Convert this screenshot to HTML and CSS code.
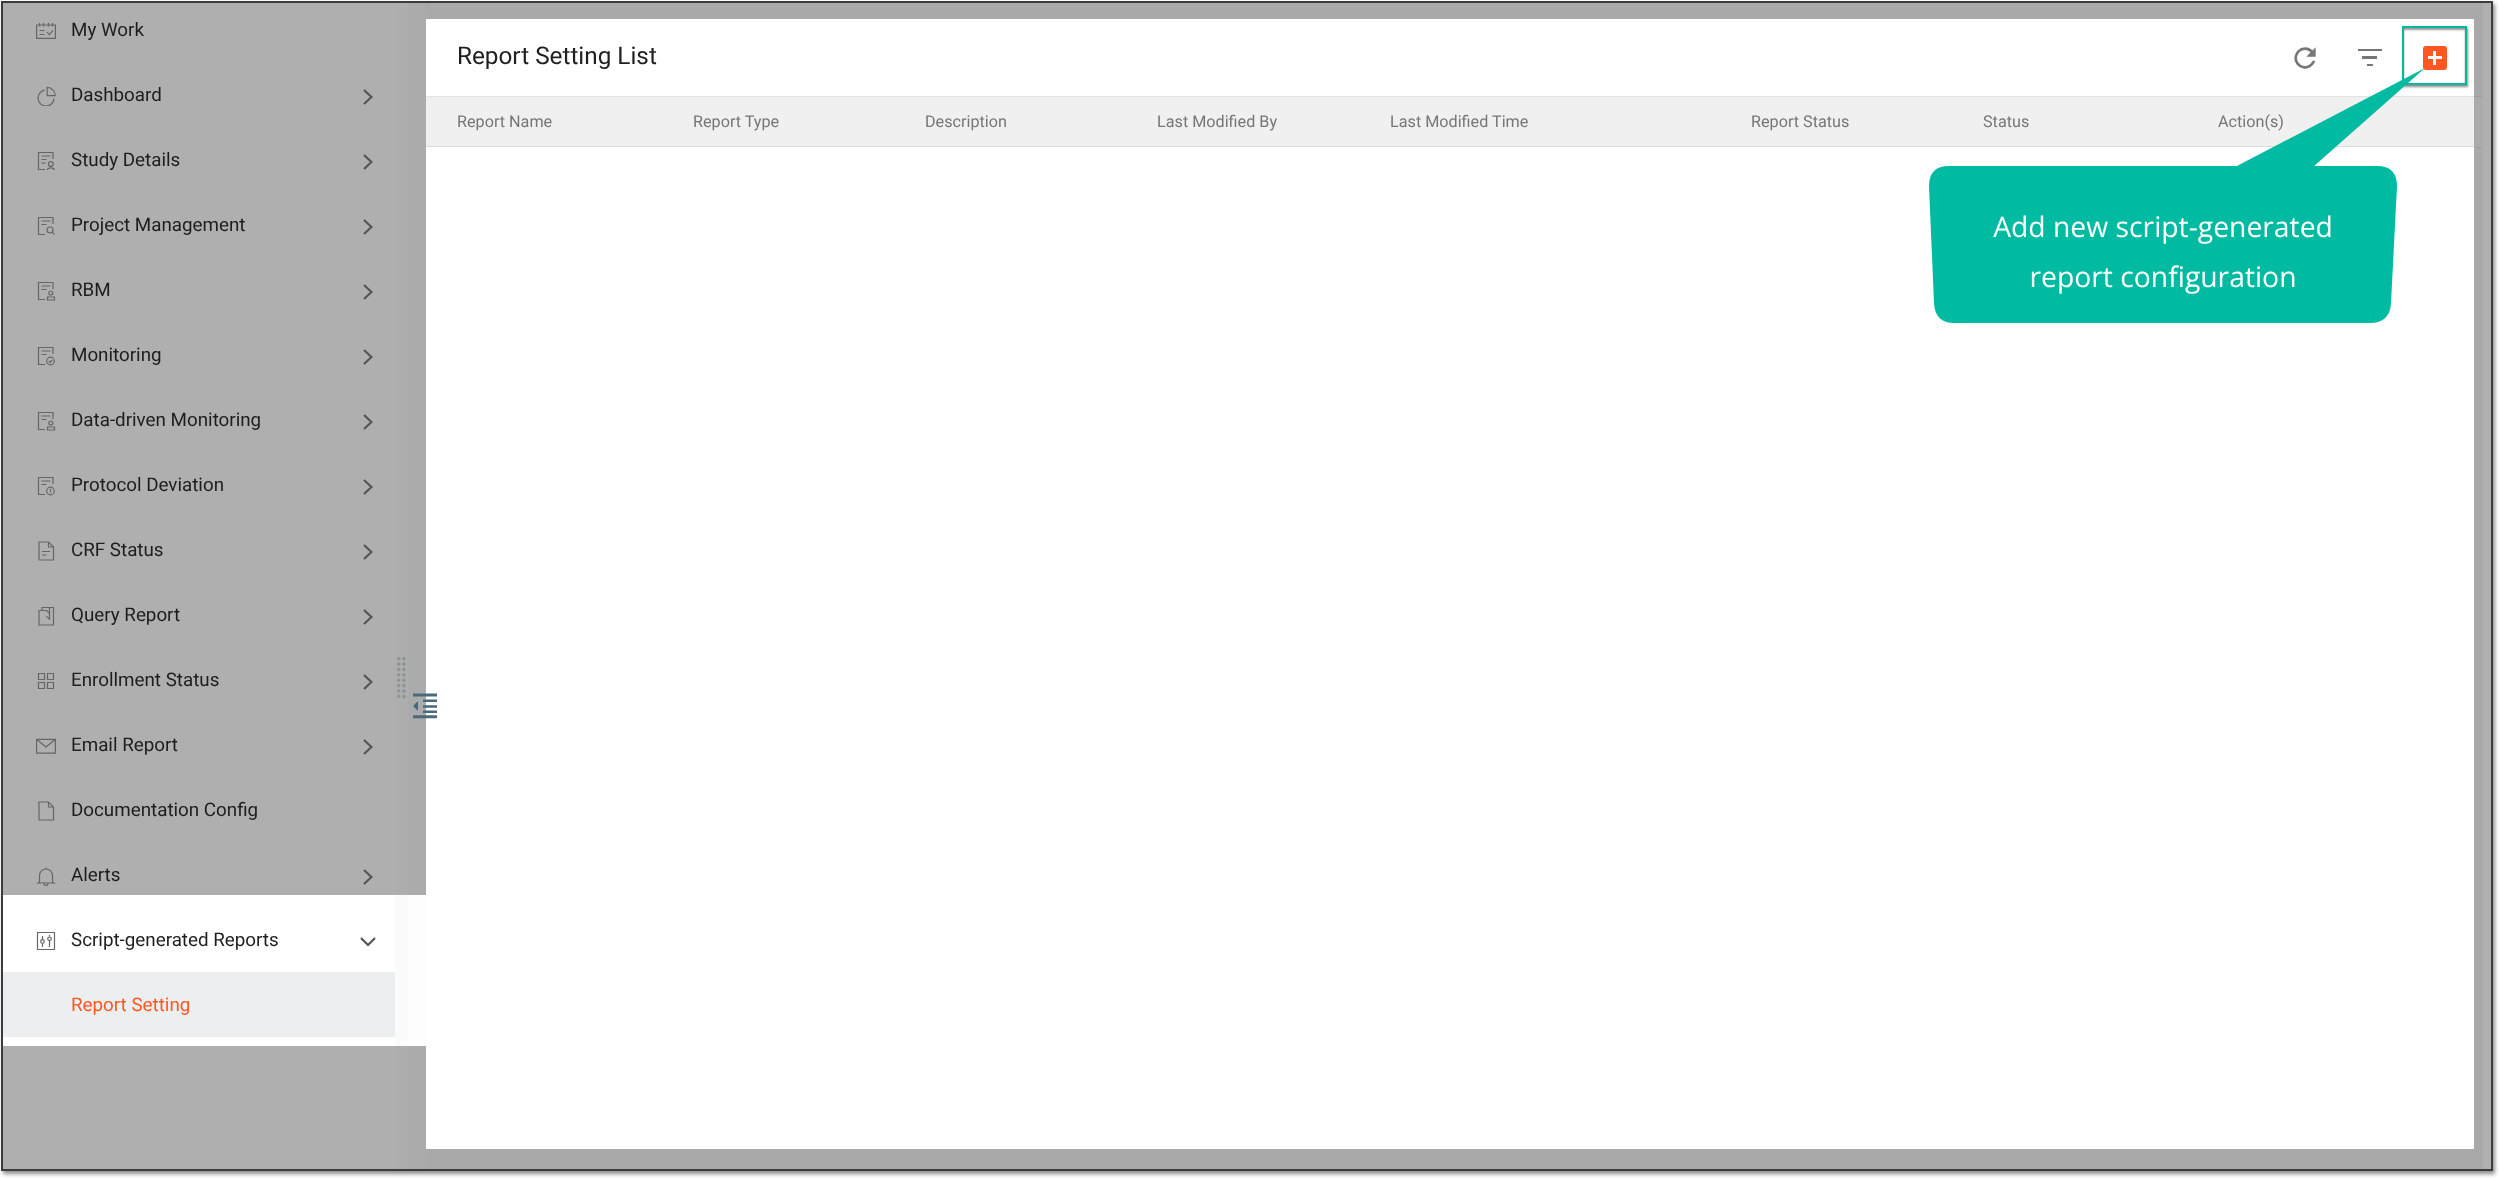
FILE: index.html
```html
<!DOCTYPE html>
<html lang="en">
<head>
<meta charset="utf-8">
<title>Report Setting List</title>
<link rel="stylesheet" href="styles.css">
</head>
<body>
<svg class="defs" width="0" height="0" aria-hidden="true">
  <defs>
    <symbol id="i-work" viewBox="0 0 20 20"><path d="M.6 4h18.800v13.400H.6zM3.500 2v3.500M7.500 2v3.500M12.500 2v3.500M16.500 2v3.500M3.500 9.500h5M3.500 13.500h5M11 11.200l2.400 2.400 3.600-4.200"/></symbol>
    <symbol id="i-dash" viewBox="0 0 20 20"><path d="M8.600 4.200A8 8 0 1 0 18 12.400M11.200 1.400v8.200h8A8.200 8.200 0 0 0 11.200 1.400z"/></symbol>
    <symbol id="i-doc" viewBox="0 0 20 20"><path d="M17 8V1.500H2.500v17H9M5.500 5h9M5.500 8.500h5"/></symbol>
    <symbol id="i-study" viewBox="0 0 20 20"><use href="#i-doc"/><path d="M5.500 12h4"/><circle cx="14.800" cy="13" r="2.400"/><path d="M11.200 19c.4-2.800 6.800-2.800 7.200 0"/></symbol>
    <symbol id="i-proj" viewBox="0 0 20 20"><use href="#i-doc"/><circle cx="14" cy="14" r="3"/><path d="M16.200 16.200l2.400 2.400"/></symbol>
    <symbol id="i-rbm" viewBox="0 0 20 20"><use href="#i-doc"/><circle cx="14.800" cy="12" r="2"/><path d="M11.500 16h7v3h-7z"/></symbol>
    <symbol id="i-mon" viewBox="0 0 20 20"><use href="#i-doc"/><circle cx="14.500" cy="15" r="3.800"/><path d="M12.800 15l1.300 1.300 2.100-2.300"/></symbol>
    <symbol id="i-dev" viewBox="0 0 20 20"><use href="#i-doc"/><circle cx="14.500" cy="15" r="3.800"/><path d="M14.500 12.800v2.800M14.500 16.400v.8"/></symbol>
    <symbol id="i-crf" viewBox="0 0 20 20"><path d="M3 1h9.500L17.500 6v13H3zM12.500 1v5h5M6 10.500h8M6 14h4.500"/></symbol>
    <symbol id="i-query" viewBox="0 0 20 20"><path d="M6 4.500H3V19h14.500V1.500H6zM6 4.500h4.500l3 3V13l-3-2.500M13.500 1.500v6"/></symbol>
    <symbol id="i-enrol" viewBox="0 0 20 20"><path d="M2.500 2.500h6v6h-6zM11.500 2.500h6v6h-6zM2.500 11.500h6v6h-6zM11.500 11.500h6v6h-6z"/></symbol>
    <symbol id="i-mail" viewBox="0 0 20 20"><path d="M.6 3.300h18.800v13.800H.6zM.6 3.300L10 11l9.400-7.700"/></symbol>
    <symbol id="i-file" viewBox="0 0 20 20"><path d="M3 1h9.500L17.500 6v13H3zM12.500 1v5h5"/></symbol>
    <symbol id="i-bell" viewBox="0 0 20 20"><path d="M10 1.500v1.500M3.500 16V9.500a6.500 6.500 0 0 1 13 0V16l1.500 1H2zM8 17.500a2 2 0 0 0 4 0"/></symbol>
    <symbol id="i-script" viewBox="0 0 20 20"><path d="M1.500 1.500h17v17h-17zM6.500 5v3M6.500 13v3M13.500 4v1.500M13.500 10v6"/><circle cx="6.500" cy="10.500" r="1.800"/><circle cx="13.500" cy="7.800" r="1.800"/></symbol>
  </defs>
</svg>

<div class="frame">
  <aside class="side">
    <nav class="menu">
      <a class="row"><svg class="ico"><use href="#i-work"/></svg><span>My Work</span></a>
      <a class="row"><svg class="ico"><use href="#i-dash"/></svg><span>Dashboard</span><svg class="chev" viewBox="0 0 10 16"><path d="M1 1l7.500 7L1 15"/></svg></a>
      <a class="row"><svg class="ico"><use href="#i-study"/></svg><span>Study Details</span><svg class="chev" viewBox="0 0 10 16"><path d="M1 1l7.500 7L1 15"/></svg></a>
      <a class="row"><svg class="ico"><use href="#i-proj"/></svg><span>Project Management</span><svg class="chev" viewBox="0 0 10 16"><path d="M1 1l7.500 7L1 15"/></svg></a>
      <a class="row"><svg class="ico"><use href="#i-rbm"/></svg><span>RBM</span><svg class="chev" viewBox="0 0 10 16"><path d="M1 1l7.500 7L1 15"/></svg></a>
      <a class="row"><svg class="ico"><use href="#i-mon"/></svg><span>Monitoring</span><svg class="chev" viewBox="0 0 10 16"><path d="M1 1l7.500 7L1 15"/></svg></a>
      <a class="row"><svg class="ico"><use href="#i-rbm"/></svg><span>Data-driven Monitoring</span><svg class="chev" viewBox="0 0 10 16"><path d="M1 1l7.500 7L1 15"/></svg></a>
      <a class="row"><svg class="ico"><use href="#i-dev"/></svg><span>Protocol Deviation</span><svg class="chev" viewBox="0 0 10 16"><path d="M1 1l7.500 7L1 15"/></svg></a>
      <a class="row"><svg class="ico"><use href="#i-crf"/></svg><span>CRF Status</span><svg class="chev" viewBox="0 0 10 16"><path d="M1 1l7.500 7L1 15"/></svg></a>
      <a class="row"><svg class="ico"><use href="#i-query"/></svg><span>Query Report</span><svg class="chev" viewBox="0 0 10 16"><path d="M1 1l7.500 7L1 15"/></svg></a>
      <a class="row"><svg class="ico"><use href="#i-enrol"/></svg><span>Enrollment Status</span><svg class="chev" viewBox="0 0 10 16"><path d="M1 1l7.500 7L1 15"/></svg></a>
      <a class="row"><svg class="ico"><use href="#i-mail"/></svg><span>Email Report</span><svg class="chev" viewBox="0 0 10 16"><path d="M1 1l7.500 7L1 15"/></svg></a>
      <a class="row"><svg class="ico"><use href="#i-file"/></svg><span>Documentation Config</span></a>
      <a class="row"><svg class="ico"><use href="#i-bell"/></svg><span>Alerts</span><svg class="chev" viewBox="0 0 10 16"><path d="M1 1l7.500 7L1 15"/></svg></a>
      <div class="group">
        <a class="row"><svg class="ico"><use href="#i-script"/></svg><span>Script-generated Reports</span><svg class="chev-down" viewBox="0 0 16 10"><path d="M1 1l7 7 7-7"/></svg></a>
        <a class="row sub"><span>Report Setting</span></a>
      </div>
    </nav>
  </aside>

  <main class="content">
    <section class="panel">
      <header class="bar">
        <h1 class="title">Report Setting List</h1>
        <div class="actions">
          <button class="act"><svg class="refresh" viewBox="0 0 24 24"><path d="M17.650 6.350A7.960 7.960 0 0 0 12 4a8 8 0 1 0 7.730 10h-2.080A6 6 0 1 1 12 6c1.660 0 3.140.69 4.220 1.780L13 11h7V4z"/></svg></button>
          <button class="act"><span class="filter"><i></i><i></i><i></i></span></button>
          <button class="act"><span class="plus"></span></button>
        </div>
      </header>
      <div class="thead">
        <span>Report Name</span>
        <span>Report Type</span>
        <span>Description</span>
        <span>Last Modified By</span>
        <span>Last Modified Time</span>
        <span>Report Status</span>
        <span>Status</span>
        <span>Action(s)</span>
      </div>
    </section>
  </main>
</div>

<div class="handle"></div>
<svg class="collapse" viewBox="0 0 24 26"><path d="M0 .5h24v3H0zM10 6.500h14V9H10zM10 12.300h14v2.500H10zM10 17.500h14V20H10zM0 22.200h24v3H0zM5 8v10l-5-5z"/></svg>
<div class="highlight"></div>
<div class="callout">
  <svg class="bubble" viewBox="0 0 468 157"><path d="M20 0H448Q468 0 468 20L462 137Q461 157 441 157H25Q6 157 5 137L0 20Q0 0 20 0Z"/><path d="M306 1L496-98 384 1Z"/></svg>
  <p class="callout-text">Add new script-generated<br>report configuration</p>
</div>
</body>
</html>
```
FILE: styles.css
```css
* { box-sizing: border-box; }
html, body { margin: 0; height: 100%; background: #fff; }
body {
  font-family: Roboto, "Liberation Sans", sans-serif;
  overflow: hidden;
  text-rendering: geometricPrecision;
  filter: blur(.5px);
}
.defs { position: absolute; }

.frame {
  display: flex;
  width: 2492px;
  height: 1170px;
  margin: 1px 0 0 1px;
  border: 2px solid #3c3c3c;
  box-shadow: 2px 3px 4px rgba(0, 0, 0, .45);
  overflow: hidden;
  background: linear-gradient(90deg, #a9a9a9 2480px, #b0b0b0 2480px);
}

.side {
  flex: 0 0 423px;
  background: linear-gradient(90deg, #afafaf 392px, #adafaf 392px, #adafaf 405px, #ababab 405px);
}
.menu { margin-top: -6px; }
.row {
  display: flex;
  align-items: center;
  height: 65px;
  padding-left: 33px;
  width: 392px;
  font-size: 18.800px;
  color: #1e1e1e;
}
.row span { flex: 1; }
.ico {
  flex: 0 0 20px;
  width: 20px;
  height: 20px;
  margin: 2px 15px 0 0;
  fill: none;
  stroke: #666;
  stroke-width: 1.200;
}
.chev {
  flex: 0 0 10px;
  width: 10px;
  height: 16px;
  margin: 4px 22px 0 0;
  fill: none;
  stroke: #555;
  stroke-width: 2.200;
}
.chev-down {
  flex: 0 0 16px;
  width: 16px;
  height: 10px;
  margin: 4px 19px 0 0;
  fill: none;
  stroke: #555;
  stroke-width: 2.200;
}
.group {
  margin-top: -12px;
  padding: 12px 0 9px;
  background: linear-gradient(90deg, #fff 392px, #fafbfb 392px, #fafbfb 405px, #fdfdfd 405px);
}
.sub {
  background: #edeef0;
  padding-left: 68px;
  color: #ff5722;
}

.content {
  flex: 1;
  display: flex;
  padding: 16px 17px 20px 0;
}
.panel { flex: 1; background: #fff; }
.bar {
  display: flex;
  align-items: center;
  justify-content: space-between;
  height: 77px;
  padding: 0 7px 5px 31px;
}
.title {
  margin: 0;
  font-size: 24.300px;
  font-weight: 400;
  color: #1f1f1f;
}
.actions { display: flex; margin-bottom: -5px; }
.act {
  display: flex;
  align-items: center;
  justify-content: center;
  width: 65px;
  height: 65px;
  padding: 0;
  border: 0;
  background: none;
}
.refresh { width: 32px; height: 32px; fill: #777; }
.filter { display: flex; flex-direction: column; align-items: center; gap: 5px; width: 24px; }
.filter i { display: block; height: 2.500px; background: #777; }
.filter i:nth-child(1) { width: 24px; }
.filter i:nth-child(2) { width: 15px; }
.filter i:nth-child(3) { width: 6px; }
.plus {
  position: relative;
  display: block;
  width: 24px;
  height: 24px;
  border-radius: 3px;
  background: #ff5722;
}
.plus::before, .plus::after {
  content: "";
  position: absolute;
  background: #fff;
}
.plus::before { left: 5px; right: 5px; top: 10.500px; height: 3px; }
.plus::after { top: 5px; bottom: 5px; left: 10.500px; width: 3px; }

.thead {
  position: relative;
  display: grid;
  grid-template-columns: 236px 232px 232px 233px 361px 232px 235px 1fr;
  align-items: center;
  height: 51px;
  padding-left: 31px;
  background: #f0f0f0;
  border-top: 1px solid #e2e2e2;
  border-bottom: 1.500px solid #dcdcdc;
  font-size: 16.200px;
  color: #767676;
}
.thead::after {
  content: "";
  position: absolute;
  top: -1px;
  bottom: -1.500px;
  left: 100%;
  width: 9px;
  background: #ababab;
  border-top: 1px solid #9f9f9f;
  border-bottom: 1px solid #9f9f9f;
}

.handle {
  position: absolute;
  left: 396px;
  top: 656px;
  width: 11px;
  height: 43px;
  background-image: radial-gradient(circle, #8e9394 1.500px, transparent 1.800px);
  background-size: 5.300px 5.400px;
}
.collapse {
  position: absolute;
  left: 413px;
  top: 693px;
  width: 24px;
  height: 26px;
  fill: #4a6a7a;
}
.highlight {
  position: absolute;
  left: 2402px;
  top: 26px;
  width: 65px;
  height: 59px;
  border: 2px solid #00b99f;
  box-shadow: 1px 2px 2px rgba(0, 0, 0, .45), inset 0 2px 2px rgba(0, 0, 0, .4);
}
.callout {
  position: absolute;
  left: 1929px;
  top: 166px;
  width: 468px;
  height: 157px;
  padding-top: 36px;
}
.bubble {
  position: absolute;
  left: 0;
  top: 0;
  width: 468px;
  height: 157px;
  overflow: visible;
  fill: #00bba1;
}
.callout-text {
  position: relative;
  margin: 0;
  font-family: "Open Sans", "Noto Sans", sans-serif;
  font-size: 28.300px;
  line-height: 50px;
  text-align: center;
  color: #fff;
}
```
